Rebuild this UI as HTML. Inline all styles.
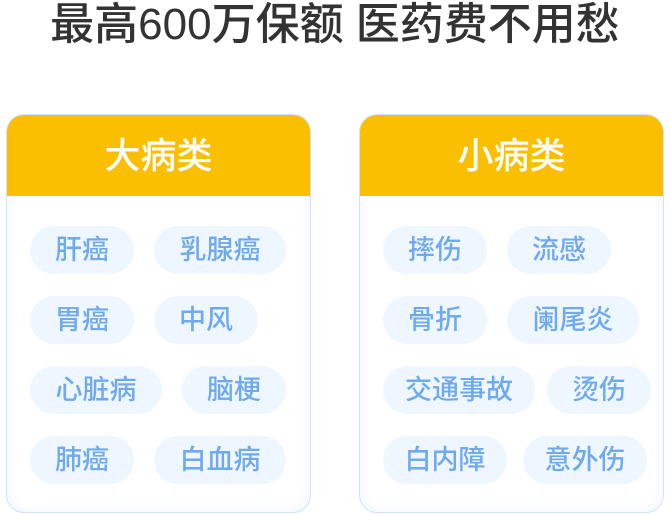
<!DOCTYPE html><html><head><meta charset="utf-8"><style>
body{margin:0;width:670px;height:514px;background:#fff;font-family:"Liberation Sans","Noto Sans CJK SC",sans-serif;position:relative;overflow:hidden}
.t{position:absolute;top:0;left:0;width:670px;text-align:center;font-size:44px;line-height:50px;color:#333;font-weight:500}
.c{position:absolute;top:114px;width:305px;height:399px;border-radius:18px;box-sizing:border-box;border:1px solid #cfe3fb;background:#fff;box-shadow:inset 0 0 14px #eef5ff;overflow:hidden}
.h{height:82px;background:#f9bf00;color:#fff;font-size:36px;line-height:84px;text-align:center;margin:-1px;font-weight:500}
.p{position:absolute;height:48px;border-radius:24px;background:#eef6ff;color:#6fa9ee;font-size:27px;line-height:48px;text-align:center;font-weight:500}
</style></head><body>
<div class="t">最高600万保额 医药费不用愁</div>
<div class="c" style="left:6px"><div class="h">大病类</div></div>
<div class="c" style="left:359px"><div class="h">小病类</div></div>
<div class="p" style="left:30px;top:226px;width:104px">肝癌</div>
<div class="p" style="left:154px;top:226px;width:132px">乳腺癌</div>
<div class="p" style="left:30px;top:296px;width:104px">胃癌</div>
<div class="p" style="left:154px;top:296px;width:104px">中风</div>
<div class="p" style="left:30px;top:366px;width:132px">心脏病</div>
<div class="p" style="left:182px;top:366px;width:104px">脑梗</div>
<div class="p" style="left:30px;top:436px;width:104px">肺癌</div>
<div class="p" style="left:154px;top:436px;width:132px">白血病</div>
<div class="p" style="left:383px;top:226px;width:104px">摔伤</div>
<div class="p" style="left:507px;top:226px;width:104px">流感</div>
<div class="p" style="left:383px;top:296px;width:104px">骨折</div>
<div class="p" style="left:507px;top:296px;width:132px">阑尾炎</div>
<div class="p" style="left:383px;top:366px;width:152px">交通事故</div>
<div class="p" style="left:547px;top:366px;width:104px">烫伤</div>
<div class="p" style="left:383px;top:436px;width:124px">白内障</div>
<div class="p" style="left:523px;top:436px;width:124px">意外伤</div>
</body></html>
